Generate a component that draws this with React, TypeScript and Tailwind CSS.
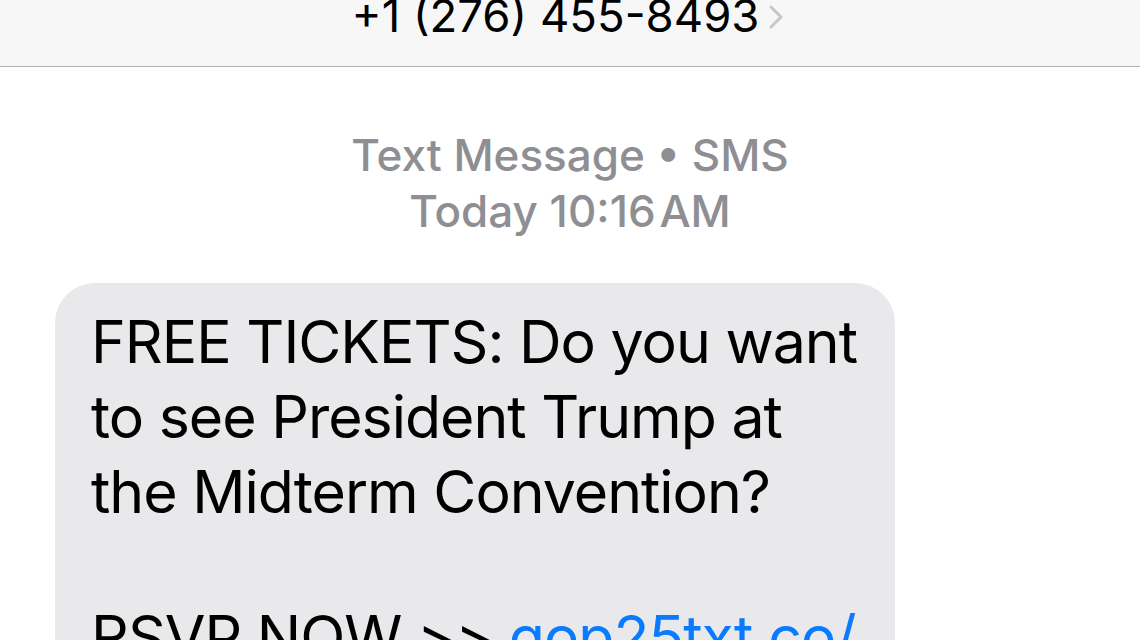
import React from "react";

export default function App() {
  return (
    <div
      className="w-[1140px] h-[640px] overflow-hidden bg-white flex flex-col"
      style={{ fontFamily: "Inter, 'Liberation Sans', sans-serif" }}
    >
      <div className="h-[67px] shrink-0 bg-[#f7f7f7] border-b border-[#b2b2b2] flex justify-center items-start">
        <div className="flex items-center -mt-[12px] -ml-[3px]">
          <span className="text-[45.5px] leading-[56px] text-black">+1 (276) 455-8493</span>
          <svg width="18" height="26" viewBox="0 0 18 26" className="ml-[8px] mt-[2px]">
            <path d="M4 3 L14 13 L4 23" fill="none" stroke="#c7c7cc" strokeWidth="3" strokeLinecap="round" strokeLinejoin="round" />
          </svg>
        </div>
      </div>
      <div className="mt-[60px] flex flex-col items-center text-[#8e8e93] text-[44px] leading-[56px] font-medium">
        <div>Text Message • SMS</div>
        <div>Today 10:16&#8202;AM</div>
      </div>
      <div className="mt-[44px] ml-[55px] w-[840px] rounded-[40px] bg-[#e9e9eb] pl-[36px] pr-[20px] pt-[21px] pb-[40px] text-black text-[59px] leading-[75px] tracking-[-1px]">
        <div>FREE TICKETS: Do you want</div>
        <div>to see President Trump at</div>
        <div>the Midterm Convention?</div>
        <div className="h-[70px]"></div>
        <div>
          RSVP NOW &gt;&gt; <span className="text-[#0a7aff]">gop25txt.co/</span>
        </div>
      </div>
    </div>
  );
}
